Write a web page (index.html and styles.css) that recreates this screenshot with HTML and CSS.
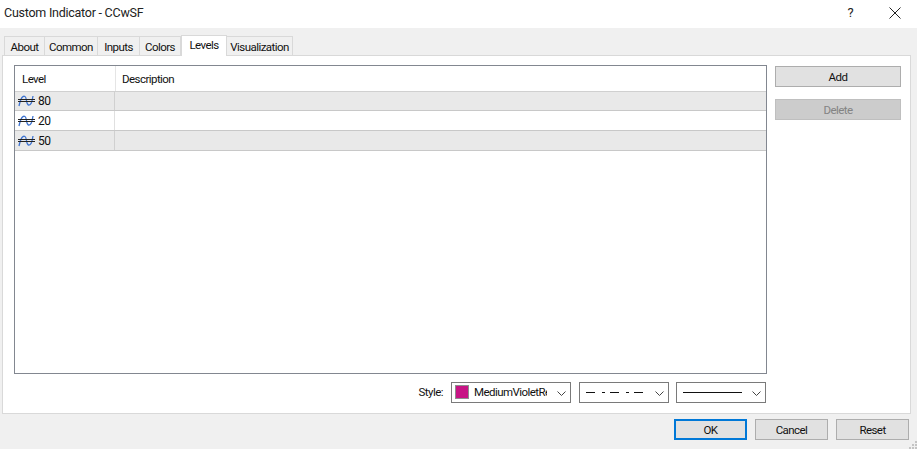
FILE: index.html
```html
<!DOCTYPE html>
<html lang="en">
<head>
<meta charset="utf-8">
<title>Custom Indicator - CCwSF</title>
<link rel="stylesheet" href="styles.css">
</head>
<body>
<div class="dialog">
  <header class="titlebar">
    <span class="title">Custom Indicator - CCwSF</span>
    <span class="help">?</span>
    <svg class="close" width="12" height="12" viewBox="0 0 12 12"><path d="M.5.5l11 11M11.5.5l-11 11" stroke="#222" stroke-width="1" fill="none"/></svg>
  </header>
  <main class="content">
    <nav class="tabs">
      <span class="tab w-about">About</span>
      <span class="tab w-common">Common</span>
      <span class="tab w-inputs">Inputs</span>
      <span class="tab w-colors">Colors</span>
      <span class="tab active w-levels">Levels</span>
      <span class="tab w-vis">Visualization</span>
    </nav>
    <section class="panel">
      <div class="upper">
        <div class="list">
          <div class="thead">
            <span class="th th-level">Level</span>
            <span class="th">Description</span>
          </div>
          <div class="row alt"><span class="cell-level"><svg class="lvl" width="17" height="12" viewBox="0 0 17 12"><path d="M1 11C3 2 5 .5 7 1.5s1 8 3.500 8.500S14 7 15 1" stroke="#3f74d0" stroke-width="1.300" fill="none"/><path d="M0 4.500h17M0 6.500h17" stroke="#222" fill="none"/></svg>80</span><span class="cell-desc"></span></div>
          <div class="row"><span class="cell-level"><svg class="lvl" width="17" height="12" viewBox="0 0 17 12"><path d="M1 11C3 2 5 .5 7 1.5s1 8 3.500 8.500S14 7 15 1" stroke="#3f74d0" stroke-width="1.300" fill="none"/><path d="M0 4.500h17M0 6.500h17" stroke="#222" fill="none"/></svg>20</span><span class="cell-desc"></span></div>
          <div class="row alt"><span class="cell-level"><svg class="lvl" width="17" height="12" viewBox="0 0 17 12"><path d="M1 11C3 2 5 .5 7 1.5s1 8 3.500 8.500S14 7 15 1" stroke="#3f74d0" stroke-width="1.300" fill="none"/><path d="M0 4.500h17M0 6.500h17" stroke="#222" fill="none"/></svg>50</span><span class="cell-desc"></span></div>
        </div>
        <div class="side">
          <button class="btn side-btn">Add</button>
          <button class="btn side-btn disabled">Delete</button>
        </div>
      </div>
      <div class="style-row">
        <span class="style-label">Style:</span>
        <div class="combo c-color"><span class="swatch"></span><span class="combo-text">MediumVioletRed</span><svg class="chev" width="9" height="5" viewBox="0 0 9 5"><path d="M.5.500l4 4 4-4" stroke="#444" fill="none"/></svg></div>
        <div class="combo c-dash"><svg class="line" width="59" height="3" viewBox="0 0 59 3"><path d="M0 1.500h9M16 1.500h3M24 1.500h9M40 1.500h3M48 1.500h9" stroke="#111" fill="none"/></svg><svg class="chev" width="9" height="5" viewBox="0 0 9 5"><path d="M.5.500l4 4 4-4" stroke="#444" fill="none"/></svg></div>
        <div class="combo c-width"><svg class="line" width="59" height="3" viewBox="0 0 59 3"><path d="M0 1.500h59" stroke="#111" fill="none"/></svg><svg class="chev" width="9" height="5" viewBox="0 0 9 5"><path d="M.5.500l4 4 4-4" stroke="#444" fill="none"/></svg></div>
      </div>
    </section>
    <footer class="footer">
      <button class="btn foot-btn primary">OK</button>
      <button class="btn foot-btn">Cancel</button>
      <button class="btn foot-btn">Reset</button>
    </footer>
    <svg class="grip" width="9" height="9" viewBox="0 0 9 9"><path d="M7 1h2v2H7zM4 4h2v2H4zM7 4h2v2H7zM1 7h2v2H1zM4 7h2v2H4zM7 7h2v2H7z" fill="#c4c4c4"/></svg>
  </main>
</div>
</body>
</html>
```
FILE: styles.css
```css
* { box-sizing: border-box; }
html, body { margin: 0; padding: 0; }
body { width: 917px; height: 449px; overflow: hidden; background: #f0f0f0; font-family: Roboto, "Noto Sans", sans-serif; font-size: 11.5px; letter-spacing: -.55px; color: #111; }
.dialog { width: 917px; height: 449px; display: flex; flex-direction: column; }
.titlebar { height: 28px; background: #fff; display: flex; align-items: center; padding: 0 16px 3px 4px; }
.title { font-size: 12.5px; flex: 1; color: #222; letter-spacing: -.25px; }
.help { font-size: 13px; margin-right: 36px; color: #222; }
.content { flex: 1; position: relative; padding: 8px 8px 0 2px; display: flex; flex-direction: column; }
.tabs { display: flex; height: 19px; padding-left: 2px; align-items: flex-end; position: relative; }
.tab { height: 19px; border: 1px solid #d9d9d9; border-bottom: 0; border-left: 0; background: #f0f0f0; text-align: center; line-height: 20px; white-space: nowrap; }
.tab:first-child { border-left: 1px solid #d9d9d9; }
.tab.active { height: 21px; background: #fff; border: 1px solid #d9d9d9; border-bottom: 0; line-height: 18px; position: relative; top: 1px; z-index: 1; }
.w-about { width: 41px; }
.w-common { width: 53px; }
.w-inputs { width: 42px; }
.w-colors { width: 41px; }
.w-levels { width: 46px; }
.w-vis { width: 66px; }
.panel { width: 909px; height: 359px; background: #fff; border: 1px solid #d9d9d9; padding: 9px 10px 0 11px; display: flex; flex-direction: column; }
.upper { display: flex; gap: 8px; height: 309px; }
.list { width: 754px; height: 309px; border: 1px solid #828790; background: #fff; }
.thead { height: 26px; display: flex; border-bottom: 1px solid #d0d0d0; }
.th { padding-left: 6px; line-height: 26px; }
.th-level { width: 101px; padding-left: 7px; border-right: 1px solid #e5e5e5; }
.row { height: 20px; display: flex; border-bottom: 1px solid #c8c8c8; width: 751px; }
.thead + .row { height: 19px; }
.row.alt { background: #e9e9e9; }
.cell-level { width: 100px; display: flex; align-items: center; padding-left: 3px; border-right: 1px solid #d0d0d0; font-size: 12px; }
.row:not(.alt) .cell-level { border-right-color: #e0e0e0; }
.lvl { margin-right: 3px; flex: none; }
.cell-desc { flex: 1; }
.side { width: 126px; display: flex; flex-direction: column; gap: 12px; padding-top: 1px; }
.btn { font: inherit; letter-spacing: inherit; color: #111; background: #e1e1e1; border: 1px solid #adadad; padding: 0; }
.side-btn { height: 21px; width: 126px; }
.side-btn.disabled { background: #cccccc; border-color: #bfbfbf; color: #838383; }
.style-row { display: flex; align-items: center; height: 22px; margin-top: 7px; padding-right: 134px; justify-content: flex-end; }
.style-label { margin-right: 8px; }
.combo { height: 21px; border: 1px solid #7a7a7a; background: #fff; display: flex; align-items: center; position: relative; }
.c-color { width: 120px; padding-left: 3px; }
.c-dash { width: 90px; margin-left: 8px; padding-left: 6px; }
.c-width { width: 90px; margin-left: 7px; padding-left: 6px; }
.swatch { width: 14px; height: 14px; background: #c71585; border: 1px solid #8e8e8e; flex: none; margin-right: 5px; }
.combo-text { width: 73px; overflow: hidden; white-space: nowrap; }
.chev { position: absolute; right: 4px; top: 8px; }
.footer { display: flex; gap: 8px; justify-content: flex-end; margin-top: 5px; }
.foot-btn { width: 73px; height: 21px; }
.foot-btn.primary { border: 2px solid #0078d7; }
.grip { position: absolute; right: 0; bottom: 0; }
```
